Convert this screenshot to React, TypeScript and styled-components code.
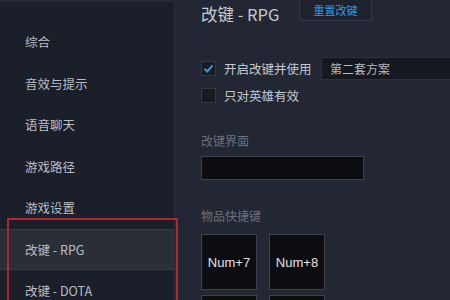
import styled, { createGlobalStyle } from "styled-components";

const GlobalStyle = createGlobalStyle`
  html, body {
    margin: 0;
    padding: 0;
    background: #222733;
  }
  body {
    font-family: "Noto Sans CJK SC", "Noto Sans", sans-serif;
  }
`;

const MENU = ["综合", "音效与提示", "语音聊天", "游戏路径", "游戏设置", "改键 - RPG", "改键 - DOTA"];
const SELECTED = 5;

const Check = () => (
  <svg width="11" height="11" viewBox="0 0 11 11">
    <path d="M1.5 5.8 L4.2 8.5 L9.6 2.4" fill="none" stroke="#3d95e0" strokeWidth="2" />
  </svg>
);

export default function App() {
  return (
    <>
      <GlobalStyle />
      <Window>
        <Sidebar>
          {MENU.map((label, i) => (
            <MenuItem key={label} $active={i === SELECTED}>
              {label}
            </MenuItem>
          ))}
          <Highlight />
        </Sidebar>
        <Main>
          <Header>
            <Title>改键 - RPG</Title>
            <ResetButton>重置改键</ResetButton>
          </Header>
          <OptionRow $top={29}>
            <CheckBox>
              <Check />
            </CheckBox>
            <OptionLabel>开启改键并使用</OptionLabel>
            <Select>第二套方案</Select>
          </OptionRow>
          <OptionRow $top={5}>
            <CheckBox />
            <OptionLabel>只对英雄有效</OptionLabel>
          </OptionRow>
          <SectionLabel $top={27}>改键界面</SectionLabel>
          <TextBox />
          <SectionLabel $top={28}>物品快捷键</SectionLabel>
          <KeyGrid>
            <KeyCell>Num+7</KeyCell>
            <KeyCell>Num+8</KeyCell>
            <KeyCell />
            <KeyCell />
          </KeyGrid>
        </Main>
      </Window>
    </>
  );
}

const Window = styled.div`
  display: flex;
  width: 450px;
  height: 300px;
  overflow: hidden;
  background: #222733;
`;

const Sidebar = styled.div`
  position: relative;
  width: 175px;
  flex-shrink: 0;
  padding-top: 19px;
  box-sizing: border-box;
  background: #1b1f29;
  border-right: 1px solid #2b303b;
  border-top: 2px solid #262a33;
`;

const MenuItem = styled.div<{ $active: boolean }>`
  height: 41.5px;
  display: flex;
  align-items: center;
  padding-left: 25px;
  font-size: 12.5px;
  color: #b9bdc5;
  box-sizing: border-box;
  background: ${(p) => (p.$active ? "#2a2e37" : "transparent")};
  border-top: 1px solid ${(p) => (p.$active ? "#353a44" : "transparent")};
  border-bottom: 1px solid ${(p) => (p.$active ? "#353a44" : "transparent")};
`;

const Highlight = styled.div`
  position: absolute;
  left: 7px;
  top: 216px;
  width: 171px;
  height: 110px;
  border: 2px solid #b7252c;
  box-sizing: border-box;
  pointer-events: none;
`;

const Main = styled.div`
  flex: 1;
  padding-left: 26px;
  display: flex;
  flex-direction: column;
  align-items: flex-start;

  & > * {
    flex-shrink: 0;
  }
`;

const Header = styled.div`
  height: 28px;
  display: flex;
  align-items: flex-start;
`;

const Title = styled.div`
  margin-top: 4px;
  font-size: 16.5px;
  line-height: 20px;
  color: #c6cad1;
  width: 98px;
`;

const ResetButton = styled.div`
  width: 73px;
  height: 21px;
  display: flex;
  align-items: center;
  justify-content: center;
  font-size: 11px;
  color: #2e9ae6;
  background: #1d222c;
  border: 1px solid #323846;
  border-top: none;
  box-sizing: border-box;
`;

const OptionRow = styled.div<{ $top: number }>`
  margin-top: ${(p) => p.$top}px;
  display: flex;
  align-items: center;
  height: 22px;
`;

const CheckBox = styled.div`
  width: 15px;
  height: 15px;
  box-sizing: border-box;
  background: #181b22;
  border: 1px solid #343945;
  display: flex;
  align-items: center;
  justify-content: center;
`;

const OptionLabel = styled.div`
  margin-left: 8px;
  font-size: 12.5px;
  color: #c3c7ce;
  width: 97px;
`;

const Select = styled.div`
  width: 160px;
  height: 23px;
  box-sizing: border-box;
  padding-left: 8px;
  display: flex;
  align-items: center;
  font-size: 12px;
  color: #b5b9c1;
  background: #15181f;
  border: 1px solid #2c313c;
`;

const SectionLabel = styled.div<{ $top: number }>`
  margin-top: ${(p) => p.$top}px;
  font-size: 12px;
  line-height: 16px;
  color: #6b717d;
`;

const TextBox = styled.div`
  margin-top: 7px;
  width: 163px;
  height: 24px;
  box-sizing: border-box;
  background: #0b0d10;
  border: 1px solid #3d424c;
`;

const KeyGrid = styled.div`
  margin-top: 10px;
  display: grid;
  grid-template-columns: 56px 56px;
  column-gap: 12px;
  row-gap: 5px;
`;

const KeyCell = styled.div`
  width: 56px;
  height: 56px;
  box-sizing: border-box;
  background: #0c0d10;
  border: 1px solid #3c414b;
  display: flex;
  align-items: center;
  justify-content: center;
  font-family: "Liberation Sans", Arial, sans-serif;
  font-size: 13px;
  color: #e2e2e2;
`;
